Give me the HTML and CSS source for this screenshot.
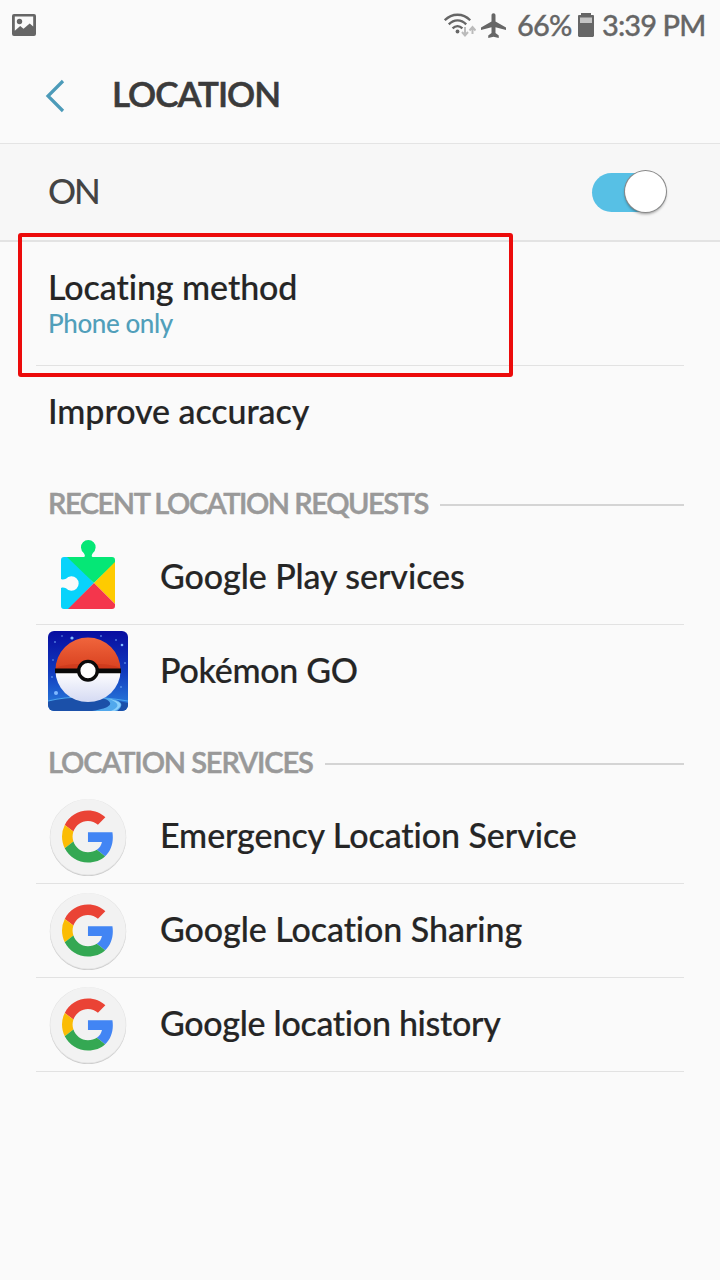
FILE: index.html
```html
<!DOCTYPE html>
<html lang="en">
<head>
<meta charset="utf-8">
<title>Location</title>
<link rel="stylesheet" href="styles.css">
</head>
<body>
<svg class="defs" width="0" height="0" aria-hidden="true">
  <symbol id="google" viewBox="0 0 80 80">
    <circle cx="40" cy="42.200" r="38" fill="#c9c9c9"/>
    <circle cx="40" cy="41.200" r="38.300" fill="#e2e2e2"/>
    <circle cx="40" cy="40.800" r="37.700" fill="#f2f2f2"/>
    <g transform="translate(14 14.6) scale(1.082)">
      <path fill="#ea4335" d="M24 9.5c3.54 0 6.71 1.22 9.21 3.6l6.85-6.85C35.9 2.38 30.47 0 24 0 14.62 0 6.51 5.38 2.56 13.22l7.98 6.19C12.43 13.72 17.74 9.5 24 9.5z"/>
      <path fill="#4285f4" d="M46.98 24.55c0-1.57-.15-3.09-.38-4.55H24v9.02h12.94c-.58 2.96-2.26 5.48-4.78 7.18l7.73 6c4.51-4.18 7.09-10.36 7.09-17.65z"/>
      <path fill="#fbbc05" d="M10.53 28.59A14.5 14.5 0 0 1 9.77 24c0-1.6.27-3.14.76-4.59l-7.98-6.19A23.9 23.9 0 0 0 0 24c0 3.88.92 7.54 2.56 10.78l7.97-6.19z"/>
      <path fill="#34a853" d="M24 48c6.48 0 11.93-2.13 15.89-5.81l-7.73-6c-2.15 1.45-4.92 2.3-8.16 2.3-6.26 0-11.57-4.22-13.47-9.91l-7.98 6.19C6.51 42.62 14.62 48 24 48z"/>
    </g>
  </symbol>
</svg>
<div class="status">
  <svg class="pic" width="24" height="22" viewBox="0 0 24 22"><path fill="#666" fill-rule="evenodd" d="M2 0h20a2 2 0 0 1 2 2v18a2 2 0 0 1-2 2H2a2 2 0 0 1-2-2V2a2 2 0 0 1 2-2zm.8 2.5v14.3l5.4-4.800 3.300 2.800 6.200-5.300 3.500 3V2.500z"/><circle cx="7.500" cy="7.500" r="2.700" fill="#666"/></svg>
  <svg class="wifi" width="32" height="26" viewBox="0 0 32 26"><g fill="none" stroke="#666" stroke-width="2.300"><path d="M.8 8.200C8 .9 19 .9 26.200 8.200"/><path d="M4.800 12.400C10 7 17 7 22.200 12.400"/><path d="M8.600 16.400C11.500 13.300 15.500 13.300 18.400 16.400"/></g><circle cx="13.500" cy="19.500" r="1.900" fill="#666"/><g fill="none" stroke="#bbb" stroke-width="2"><path d="M21 15v8M18 20l3 3.500 3-3.500M28.500 22v-7M25.500 18.500l3-3.500 3 3.500"/></g></svg>
  <svg class="plane" width="25" height="25" viewBox="2 2 20 20"><path fill="#666" d="M22 15.600v-2L13.600 8.700V3.900c0-1-.7-1.700-1.600-1.700s-1.600.7-1.600 1.700v4.800L2 13.600v2l8.400-2.200v4.500l-2.600 2V22L12 20.900 16.200 22v-2.100l-2.600-2v-4.500z"/></svg>
  <span class="percent">66%</span>
  <svg class="battery" width="16" height="24" viewBox="0 0 16 24"><path fill="#666" d="M3 0h10v2h2.500L16 3v20l-1 1H1l-1-1V3l.5-1H3z"/><path fill="#c4c4c4" d="M2 4.500h12v5.500H2z"/></svg>
  <span class="time">3:39 PM</span>
</div>
<header class="header">
  <svg class="back" width="20" height="34" viewBox="0 0 20 34"><path d="M18 2 3 17l15 15" fill="none" stroke="#4c9bb9" stroke-width="3.200"/></svg>
  <h1 class="title">LOCATION</h1>
</header>
<div class="master">
  <span class="on">ON</span>
  <span class="switch"><span class="knob"></span></span>
</div>
<main class="list">
  <div class="item method">
    <span class="label t-method">Locating method</span>
    <span class="sub">Phone only</span>
    <div class="highlight"></div>
  </div>
  <div class="item improve"><span class="label t-improve">Improve accuracy</span></div>
  <div class="section"><h2 class="section-title s-recent">RECENT LOCATION REQUESTS</h2><span class="rule"></span></div>
  <div class="item app">
    <svg class="icon" viewBox="0 0 80 80">
      <defs><clipPath id="puzzle"><path d="M16 26h20c1.400 0 1-2.500-.3-4a7.300 7.300 0 1 1 9.200 0c-1.300 1.500-1.700 4-.3 4H64a3 3 0 0 1 3 3v46a3 3 0 0 1-3 3H16a3 3 0 0 1-3-3V57.500c0-1.500 3-1.300 5-.3a7.200 7.200 0 1 0 0-9.400c-2 1-5 1.200-5-.3V29a3 3 0 0 1 3-3z"/></clipPath></defs>
      <g transform="translate(0 -6)"><g clip-path="url(#puzzle)"><path fill="#08d3fb" d="M10 20h8l28 32-27 28h-9z"/><path fill="#05e776" d="M16 0h60v23L46 52 19 26z"/><path fill="#fecb00" d="M70 28v48L46 52z"/><path fill="#f4364c" d="M46 52l27 27H19z"/></g></g>
    </svg>
    <span class="label t-play">Google Play services</span>
  </div>
  <div class="item app last">
    <svg class="icon" viewBox="0 0 80 80">
      <defs>
        <clipPath id="tile"><rect width="80" height="80" rx="6"/></clipPath>
        <linearGradient id="sky" x2="0" y2="1"><stop stop-color="#080da0"/><stop offset=".5" stop-color="#1039bd"/><stop offset="1" stop-color="#2b83df"/></linearGradient>
        <linearGradient id="red" x2="0" y2="1"><stop stop-color="#f0653c"/><stop offset="1" stop-color="#d8401f"/></linearGradient>
        <linearGradient id="white" x2="0" y2="1"><stop stop-color="#fff"/><stop offset="1" stop-color="#d5daf3"/></linearGradient>
      </defs>
      <g clip-path="url(#tile)">
        <rect width="80" height="80" fill="url(#sky)"/>
        <path fill="#1b50a9" d="M0 70c24-6 50-5 80 2v8H0z"/>
        <path d="M0 70c24-6 50-5 80 0" fill="none" stroke="#4aa5ef" stroke-width="1.200"/>
        <path fill="#51a8ec" d="M55 67c20 1 22 7 14 13H44c19-3 24-8 11-13z"/>
        <path fill="#8bd0fb" d="M61 68c15 3 14 7 6 12h-4c9-4 9-8-2-12z"/>
        <g fill="#7fb9ff"><circle cx="24" cy="7" r="1.600"/><circle cx="8" cy="62" r="2"/><circle cx="74" cy="14" r="1.300"/><circle cx="68" cy="9" r=".8"/><circle cx="7" cy="11" r=".8"/><circle cx="5" cy="29" r=".7"/><circle cx="14" cy="5" r=".7"/><circle cx="53" cy="5" r=".8"/><circle cx="77" cy="32" r=".8"/><circle cx="4" cy="46" r=".8"/><circle cx="73" cy="56" r=".8"/></g>
        <path fill="url(#red)" d="M7.500 39a32.500 32.500 0 0 1 65 0z"/>
        <path fill="#bd2c13" opacity=".35" d="M7.500 38c1-3 14-5 25-5h16c11 0 22 2 24 5z"/>
        <path fill="url(#white)" d="M7.500 40a32.500 31 0 0 0 65 0z"/>
        <path fill="#090909" d="M7 37.500h66v4.800H7z"/>
        <circle cx="40" cy="39.700" r="9.300" fill="#fff" stroke="#0b0b0b" stroke-width="3.400"/>
      </g>
    </svg>
    <span class="label t-poke">Pokémon GO</span>
  </div>
  <div class="section"><h2 class="section-title s-services">LOCATION SERVICES</h2><span class="rule"></span></div>
  <div class="item app"><svg class="icon"><use href="#google"/></svg><span class="label t-emergency">Emergency Location Service</span></div>
  <div class="item app"><svg class="icon"><use href="#google"/></svg><span class="label t-sharing">Google Location Sharing</span></div>
  <div class="item app"><svg class="icon"><use href="#google"/></svg><span class="label t-history">Google location history</span></div>
</main>
</body>
</html>
```
FILE: styles.css
```css
* { box-sizing: border-box; }
body { margin: 0; width: 720px; min-height: 1280px; background: #fafafa; color: #252525; font-family: Lato, "Open Sans", sans-serif; font-weight: 500; font-variant-ligatures: none; overflow: hidden; }
h1, h2 { margin: 0; }
.defs { display: none; }
.status { height: 50px; display: flex; align-items: center; padding: 0 12px; color: #666; font-size: 29px; white-space: nowrap; -webkit-text-stroke: 0.3px; }
.status svg { flex: none; }
.wifi { margin-left: 408px; }
.plane { margin-left: 5px; }
.percent { width: 54px; margin-left: 11px; padding-bottom: 2px; letter-spacing: -0.8px; }
.battery { margin-left: 7px; }
.time { margin-left: 8px; padding-bottom: 2px; letter-spacing: -0.9px; }
.header { height: 94px; display: flex; align-items: center; padding-left: 45px; border-bottom: 1px solid #e4e4e4; }
.back { margin-bottom: 2px; }
.title { margin-left: 47px; padding-bottom: 7px; font-size: 35px; font-weight: 600; color: #3b3b3b; line-height: 40px; letter-spacing: -1px; -webkit-text-stroke: 0.6px; }
.master { height: 98px; display: flex; align-items: center; justify-content: space-between; padding: 0 54px 0 48px; background: #f7f7f7; border-bottom: 2px solid #e3e3e3; }
.on { padding-bottom: 4px; font-size: 35px; color: #444; letter-spacing: -2px; }
.switch { display: flex; justify-content: flex-end; align-items: center; width: 74px; height: 39px; border-radius: 20px; background: #57c0e5; }
.knob { width: 41px; height: 41px; flex: none; margin-bottom: 1px; border-radius: 50%; background: #fff; box-shadow: 0 0 0 1px #888, 0 2px 3px rgba(0,0,0,.4); }
.list { padding: 0 36px; }
.item { position: relative; padding-left: 12px; border-bottom: 1px solid #e2e2e2; white-space: nowrap; }
.label { font-size: 34px; line-height: 40px; letter-spacing: -0.07px; -webkit-text-stroke: 0.2px; }
.t-poke, .t-history { letter-spacing: -0.3px; }
.method { height: 124px; display: flex; flex-direction: column; padding-top: 25px; }
.sub { font-size: 26px; line-height: 32px; color: #519fba; letter-spacing: -0.4px; }
.highlight { position: absolute; left: -18px; top: -9px; width: 495px; height: 144px; border: 4px solid #ec0b0b; border-radius: 3px; z-index: 1; }
.improve { height: 93px; padding-top: 25px; border: 0; }
.section { height: 72px; display: flex; align-items: center; padding: 18px 0 0 12px; gap: 12px; }
.section-title { flex: none; padding-bottom: 2px; font-size: 29px; line-height: 34px; font-weight: 600; color: #999; white-space: nowrap; -webkit-text-stroke: 0.5px; }
.s-recent { width: 380px; letter-spacing: -1.45px; }
.s-services { width: 265px; letter-spacing: -1.1px; }
.rule { flex: 1; height: 2px; margin-top: 2px; background: #d4d4d4; }
.app { height: 94px; display: flex; align-items: center; gap: 32px; padding-bottom: 1px; }
.app .label { padding-bottom: 3px; }
.icon { width: 80px; height: 80px; flex: none; }
.last { height: 93px; border: 0; }
```
